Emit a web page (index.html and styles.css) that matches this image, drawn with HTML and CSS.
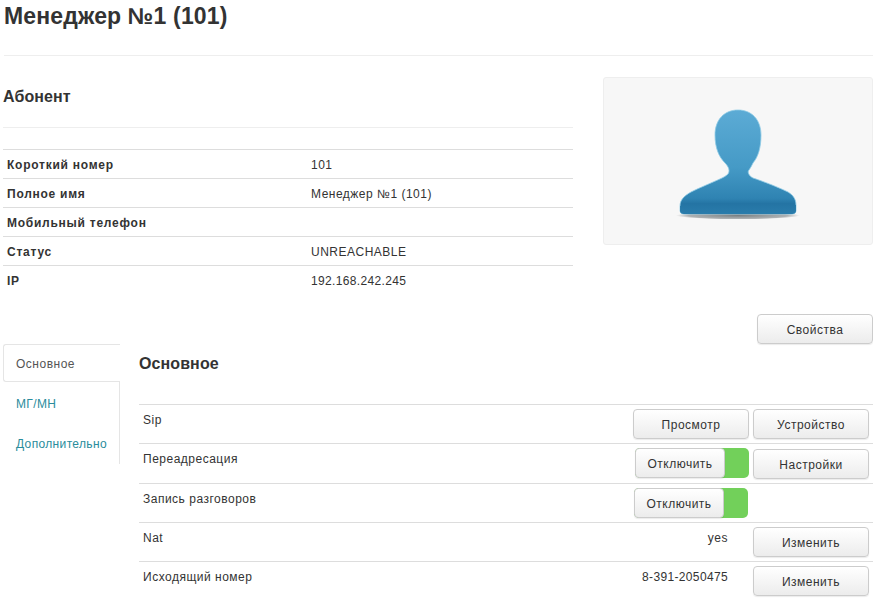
FILE: index.html
```html
<!DOCTYPE html>
<html lang="ru">
<head>
<meta charset="utf-8">
<title>Менеджер №1 (101)</title>
<link rel="stylesheet" href="styles.css">
</head>
<body>
<div class="page">
  <h1 class="title">Менеджер №1 (101)</h1>
  <div class="top">
    <div class="info">
      <h2 class="section">Абонент</h2>
      <div class="props">
        <div class="prop"><b>Короткий номер</b><span>101</span></div>
        <div class="prop"><b>Полное имя</b><span>Менеджер №1 (101)</span></div>
        <div class="prop"><b>Мобильный телефон</b><span></span></div>
        <div class="prop"><b>Статус</b><span>UNREACHABLE</span></div>
        <div class="prop"><b>IP</b><span class="num">192.168.242.245</span></div>
      </div>
    </div>
    <div class="photo">
      <svg class="avatar" viewBox="675 105 126 118" width="126" height="118" aria-hidden="true">
        <defs>
          <linearGradient id="body" x1="0" y1="0" x2="0" y2="1">
            <stop offset="0" stop-color="#5cabd5"/>
            <stop offset="0.55" stop-color="#459ac6"/>
            <stop offset="0.85" stop-color="#2f83b2"/>
            <stop offset="0.9" stop-color="#2474a4"/>
            <stop offset="1" stop-color="#2a7cab"/>
          </linearGradient>
          <radialGradient id="shade" cx="0.5" cy="0.5" r="0.5">
            <stop offset="0" stop-color="#5a6266" stop-opacity="0.8"/>
            <stop offset="0.8" stop-color="#70787c" stop-opacity="0.55"/>
            <stop offset="1" stop-color="#888" stop-opacity="0"/>
          </radialGradient>
        </defs>
        <ellipse cx="738" cy="215.5" rx="62" ry="4" fill="url(#shade)"/>
        <path fill="url(#body)" stroke="#8fcbe6" stroke-width="0.8" d="M738 110C724 110 715 120 715 135C715 148 719 157 725 163C729 167 730 171 728 174C726 176 724 177 721 178.5C711 183 699 188 691 192C684 196 680 200 680 206L680 211Q680 214 684 214L792 214Q796 214 796 211L796 205C796 199 793 195 788 192C778 187 762 181 753 178C749 176 747 172 749 170C751 167 752 165 753 163C758 157 761 148 761 135C761 120 752 110 738 110Z"/>
        <path fill="none" stroke="#2a7cab" stroke-width="1" d="M680.5 206L680.5 211Q680.5 213.5 684 213.5L792 213.5Q795.5 213.5 795.5 211L795.5 205"/>
      </svg>
    </div>
  </div>
  <div class="actions"><button class="btn">Свойства</button></div>
  <div class="bottom">
    <nav class="tabs">
      <a class="tab tab-active" href="#">Основное</a>
      <div class="tab-rest">
        <a class="tab" href="#">МГ/МН</a>
        <a class="tab" href="#">Дополнительно</a>
      </div>
    </nav>
    <section class="panel">
      <h2 class="panel-title">Основное</h2>
      <div class="row">
        <span class="label">Sip</span>
        <button class="btn">Просмотр</button>
        <button class="btn">Устройство</button>
      </div>
      <div class="row row-tall">
        <span class="label">Переадресация</span>
        <div class="toggle toggle-up"><button class="toggle-btn">Отключить</button><i class="toggle-on"></i></div>
        <button class="btn">Настройки</button>
      </div>
      <div class="row">
        <span class="label">Запись разговоров</span>
        <div class="toggle toggle-left"><button class="toggle-btn">Отключить</button><i class="toggle-on"></i></div>
      </div>
      <div class="row">
        <span class="label">Nat</span>
        <span class="value">yes</span>
        <button class="btn">Изменить</button>
      </div>
      <div class="row">
        <span class="label">Исходящий номер</span>
        <span class="value num">8-391-2050475</span>
        <button class="btn">Изменить</button>
      </div>
    </section>
  </div>
</div>
</body>
</html>
```
FILE: styles.css
```css
html, body {
  margin: 0;
  padding: 0;
  background: #fff;
}
body {
  font-family: "Liberation Sans", Arial, sans-serif;
  font-size: 12px;
  letter-spacing: 0.5px;
  color: #333;
  overflow: hidden;
}
.page {
  width: 873px;
  height: 599px;
  overflow: hidden;
}
.num {
  letter-spacing: 0.35px;
}
.title {
  margin: 0 0 0 4px;
  height: 55px;
  font-size: 23px;
  line-height: 32px;
  font-weight: bold;
  letter-spacing: 0.15px;
  border-bottom: 1px solid #eee;
}
.top {
  display: flex;
  justify-content: space-between;
  align-items: flex-start;
  padding: 21px 0 0 3px;
}
.info {
  width: 570px;
}
.section {
  margin: 0;
  height: 50px;
  font-size: 16px;
  line-height: 40px;
  border-bottom: 1px solid #eee;
  letter-spacing: 0.1px;
}
.props {
  margin-top: 21px;
}
.prop {
  display: flex;
  height: 28px;
  line-height: 31px;
  border-top: 1px solid #ddd;
  padding-left: 4px;
}
.prop b {
  width: 304px;
  letter-spacing: 0.75px;
}
.photo {
  box-sizing: border-box;
  width: 270px;
  height: 168px;
  display: flex;
  justify-content: center;
  align-items: center;
  padding-top: 6px;
  background: #f7f7f7;
  border: 1px solid #eee;
  border-radius: 3px;
}
.actions {
  display: flex;
  justify-content: flex-end;
  margin-top: 20px;
}
.btn, .toggle-btn {
  font: inherit;
  letter-spacing: inherit;
  color: #333;
  height: 30px;
  padding: 1px 0 0;
  background: linear-gradient(#fff, #ececec);
  border: 1px solid #ccc;
  border-radius: 4px;
  box-shadow: 0 1px 1px rgba(0, 0, 0, 0.08);
}
.btn {
  width: 116px;
}
.bottom {
  display: flex;
  align-items: flex-start;
}
.tabs {
  width: 117px;
  margin-left: 3px;
  flex: none;
}
.tab {
  display: block;
  height: 40px;
  line-height: 44px;
  padding-left: 13px;
  color: #2a8c9c;
  letter-spacing: 0.35px;
  text-decoration: none;
}
.tab-active {
  box-sizing: border-box;
  height: 38px;
  line-height: 38px;
  padding-left: 12px;
  color: #555;
  letter-spacing: 0.5px;
  border: 1px solid #e5e5e5;
  border-right: 0;
  border-radius: 3px 0 0 3px;
}
.tab-rest {
  height: 82px;
  border-right: 1px solid #e5e5e5;
  box-sizing: border-box;
}
.panel {
  flex: 1;
  margin-left: 19px;
}
.panel-title {
  margin: 0;
  height: 60px;
  font-size: 16px;
  line-height: 40px;
  letter-spacing: 0.1px;
}
.row {
  display: flex;
  align-items: flex-start;
  gap: 4px;
  height: 34px;
  padding: 4px 4px 0 4px;
  border-top: 1px solid #ddd;
}
.row-tall {
  padding-top: 5px;
}
.label {
  flex: 1;
  line-height: 20px;
  margin-top: 1px;
}
.row-tall .label {
  margin-top: 0;
}
.value {
  line-height: 20px;
  margin-right: 21px;
  margin-top: 1px;
}
.toggle {
  display: flex;
  width: 114px;
  height: 30px;
  background: #72d05a;
  border-radius: 5px;
}
.toggle-up {
  margin-top: -1px;
}
.toggle-left {
  margin-right: 121px;
}
.toggle-btn {
  width: 90px;
}
.toggle-on {
  flex: 1;
}
```
